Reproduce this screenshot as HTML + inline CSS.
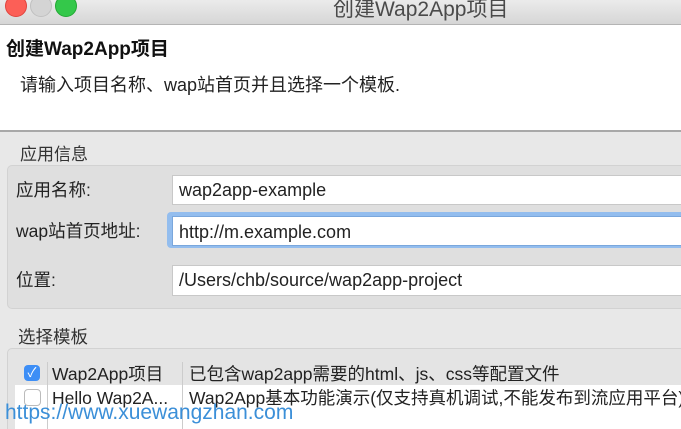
<!DOCTYPE html>
<html style="overflow:hidden"><head><meta charset="utf-8"><style>
html,body{margin:0;width:681px;height:429px;overflow:hidden}
body{background:#e8e8e8;font-family:"Liberation Sans","Noto Sans CJK SC",sans-serif;position:relative;color:#222}
.a{position:absolute;white-space:nowrap;line-height:20px}
.tb{left:0;top:0;width:681px;height:24px;background:linear-gradient(#ebebeb,#d6d6d6);border-bottom:1px solid #b4b4b4}
.dot{position:absolute;top:-5px;width:20px;height:20px;border-radius:50%}
.inp{position:absolute;left:172px;width:520px;background:#fff;border:1px solid #c8c8c8;font-size:18px;padding-left:6px;color:#222;white-space:nowrap}
</style></head><body>
<div class="a tb"></div>
<div class="dot" style="left:5px;background:#fc5f57;border:1px solid #e0443e"></div>
<div class="dot" style="left:30px;background:#d4d4d4;border:1px solid #c0c0c0"></div>
<div class="dot" style="left:55px;background:#34c84a;border:1px solid #22a834"></div>
<div class="a" style="left:333px;top:0;font-size:21px;color:#4a4a4a">创建Wap2App项目</div>
<div class="a" style="left:0;top:25px;width:681px;height:105px;background:#fff;border-bottom:2px solid #a8a8a8"></div>
<div class="a" style="left:6px;top:40px;font-size:19px;font-weight:bold;color:#111">创建Wap2App项目</div>
<div class="a" style="left:20px;top:75px;font-size:18px;color:#222">请输入项目名称、wap站首页并且选择一个模板.</div>
<div class="a" style="left:20px;top:145px;font-size:17px;color:#333">应用信息</div>
<div class="a" style="left:7px;top:165px;width:690px;height:142px;background:#dfdfdf;border:1px solid #d2d2d2;border-radius:5px"></div>
<div class="a" style="left:16px;top:180px;font-size:17.5px">应用名称:</div>
<div class="inp" style="top:175px;height:28px;line-height:28px">wap2app-example</div>
<div class="a" style="left:16px;top:221px;font-size:17.5px">wap站首页地址:</div>
<div class="a" style="left:167px;top:212px;width:530px;height:36px;background:#93bdee;border-radius:4px"></div>
<div class="inp" style="top:216px;height:28px;line-height:30px;border-color:#7aa7dc">http://m.example.com</div>
<div class="a" style="left:16px;top:270px;font-size:17.5px">位置:</div>
<div class="inp" style="top:265px;height:29px;line-height:29px">/Users/chb/source/wap2app-project</div>
<div class="a" style="left:18px;top:327px;font-size:17.5px;color:#333">选择模板</div>
<div class="a" style="left:7px;top:348px;width:690px;height:100px;background:#e4e4e4;border:1px solid #d2d2d2;border-radius:5px"></div>
<div class="a" style="left:15px;top:385px;width:681px;height:50px;background:#fff"></div>
<div class="a" style="left:47px;top:362px;width:1px;height:70px;background:#ccc"></div>
<div class="a" style="left:182px;top:362px;width:1px;height:70px;background:#ccc"></div>
<div class="a" style="left:24px;top:365px;width:16px;height:16px;border-radius:4px;background:#3d8ef6;color:#fff;font-size:13px;line-height:16px;text-align:center">✓</div>
<div class="a" style="left:24px;top:389px;width:15px;height:15px;border-radius:4px;background:#fff;border:1px solid #bbb"></div>
<div class="a" style="left:52px;top:364px;font-size:17.5px">Wap2App项目</div>
<div class="a" style="left:189px;top:364px;font-size:17.5px">已包含wap2app需要的html、js、css等配置文件</div>
<div class="a" style="left:52px;top:388px;font-size:17.5px">Hello Wap2A...</div>
<div class="a" style="left:189px;top:388px;font-size:17.5px">Wap2App基本功能演示(仅支持真机调试,不能发布到流应用平台)</div>
<div class="a" style="left:5px;top:403px;font-size:21px;color:#3b8fd8">https://www.xuewangzhan.com</div>
</body></html>
